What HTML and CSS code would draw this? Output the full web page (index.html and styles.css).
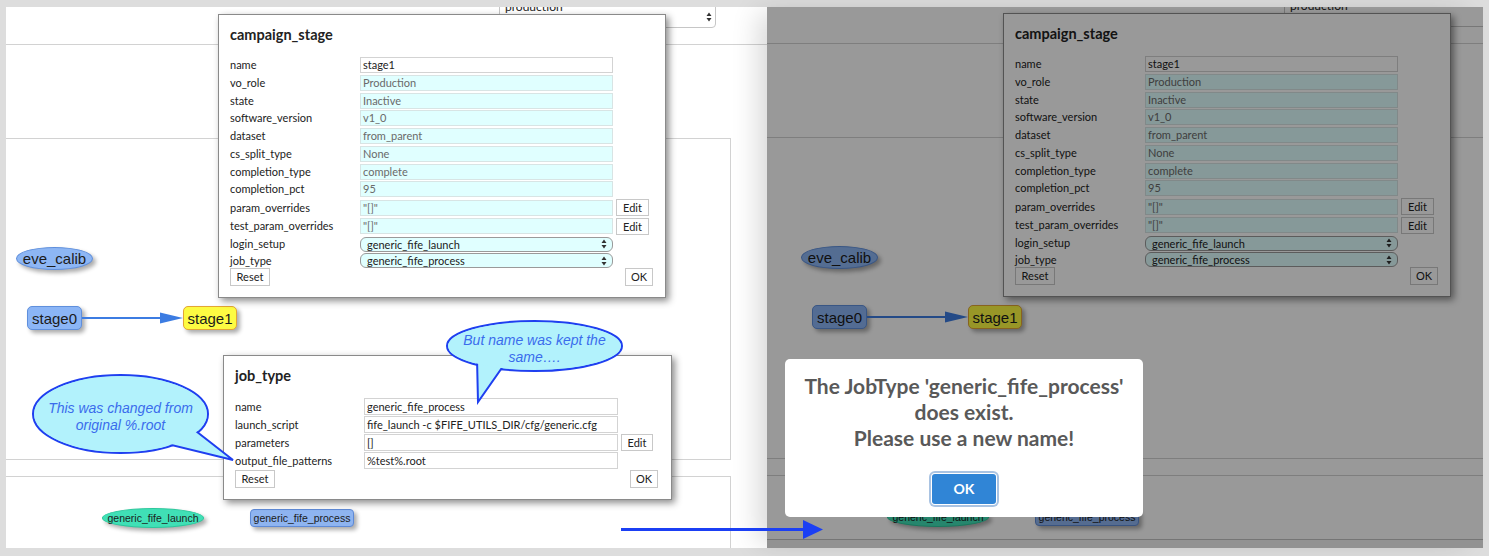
FILE: index.html
```html
<!DOCTYPE html>
<html>
<head>
<meta charset="utf-8">
<title>POMS campaign editor</title>
<link rel="stylesheet" href="styles.css">
</head>
<body>
<div class="stage">

  <div class="panel left">
    <div class="hdr">
      <div class="sel-top"><span>production</span><svg class="ud" width="6" height="10" viewBox="0 0 6 10"><path d="M0.5 4 3 0.5 5.5 4Z M0.5 6 3 9.5 5.5 6Z" fill="#333"/></svg></div>
    </div>
    <div class="band"></div>
    <div class="graph">
      <div class="canvas">
        <div class="node ell eve">eve_calib</div>
        <div class="node box s0">stage0</div>
        <svg class="edge" width="102" height="14" viewBox="0 0 102 14"><line x1="0" y1="7" x2="80" y2="7" stroke="#3c7ce2" stroke-width="2"/><polygon points="78,1.5 101,7 78,12.5" fill="#3c7ce2"/></svg>
        <div class="node box s1">stage1</div>
      </div>
    </div>
    <div class="gap"></div>
    <div class="jobs">
      <div class="canvas">
        <div class="node ell launch">generic_fife_launch</div>
        <div class="node box proc">generic_fife_process</div>
      </div>
    </div>

    <div class="dlg cs">
      <h3 class="dlg-title">campaign_stage</h3>
      <div class="form">
        <div class="row"><span class="lbl">name</span><span class="fld">stage1</span></div>
        <div class="row"><span class="lbl">vo_role</span><span class="fld ro">Production</span></div>
        <div class="row"><span class="lbl">state</span><span class="fld ro">Inactive</span></div>
        <div class="row"><span class="lbl">software_version</span><span class="fld ro">v1_0</span></div>
        <div class="row"><span class="lbl">dataset</span><span class="fld ro">from_parent</span></div>
        <div class="row"><span class="lbl">cs_split_type</span><span class="fld ro">None</span></div>
        <div class="row"><span class="lbl">completion_type</span><span class="fld ro">complete</span></div>
        <div class="row"><span class="lbl">completion_pct</span><span class="fld ro">95</span></div>
        <div class="row"><span class="lbl">param_overrides</span><span class="fld ro">"[]"</span><span class="btn edit">Edit</span></div>
        <div class="row"><span class="lbl">test_param_overrides</span><span class="fld ro">"[]"</span><span class="btn edit">Edit</span></div>
        <div class="row"><span class="lbl">login_setup</span><span class="sel"><span>generic_fife_launch</span><svg class="ud" width="6" height="10" viewBox="0 0 6 10"><path d="M0.5 4 3 0.5 5.5 4Z M0.5 6 3 9.5 5.5 6Z" fill="#333"/></svg></span></div>
        <div class="row"><span class="lbl">job_type</span><span class="sel"><span>generic_fife_process</span><svg class="ud" width="6" height="10" viewBox="0 0 6 10"><path d="M0.5 4 3 0.5 5.5 4Z M0.5 6 3 9.5 5.5 6Z" fill="#333"/></svg></span></div>
      </div>
      <div class="btns"><span class="btn reset">Reset</span><span class="btn ok">OK</span></div>
    </div>

    <div class="dlg jt">
      <h3 class="dlg-title">job_type</h3>
      <div class="form">
        <div class="row"><span class="lbl">name</span><span class="fld">generic_fife_process</span></div>
        <div class="row"><span class="lbl">launch_script</span><span class="fld">fife_launch -c $FIFE_UTILS_DIR/cfg/generic.cfg</span></div>
        <div class="row"><span class="lbl">parameters</span><span class="fld">[]</span><span class="btn edit">Edit</span></div>
        <div class="row"><span class="lbl">output_file_patterns</span><span class="fld">%test%.root</span></div>
      </div>
      <div class="btns"><span class="btn reset">Reset</span><span class="btn ok">OK</span></div>
    </div>

    <div class="bubble b1">
      <svg width="206" height="91" viewBox="0 0 206 91">
        <ellipse cx="90.5" cy="42" rx="87.5" ry="39" fill="#b2f2fc" stroke="#1f3ff0" stroke-width="2"/>
        <polygon points="162,56 203,88 133,71" fill="#b2f2fc" stroke="#1f3ff0" stroke-width="2"/>
        <ellipse cx="90.5" cy="42" rx="86.3" ry="37.8" fill="#b2f2fc"/>
      </svg>
      <div class="btxt t1">This was changed from<br>original %.root</div>
    </div>

    <div class="bubble b2">
      <svg width="181" height="87" viewBox="0 0 181 87">
        <ellipse cx="90.5" cy="28" rx="87.5" ry="25" fill="#b2f2fc" stroke="#1f3ff0" stroke-width="2"/>
        <polygon points="33,40 34,84 62,44" fill="#b2f2fc" stroke="#1f3ff0" stroke-width="2"/>
        <ellipse cx="90.5" cy="28" rx="86.3" ry="23.8" fill="#b2f2fc"/>
      </svg>
      <div class="btxt t2">But name was kept the<br>same….</div>
    </div>
  </div>

  <div class="panel right">
    <div class="hdr">
      <div class="sel-top"><span>production</span><svg class="ud" width="6" height="10" viewBox="0 0 6 10"><path d="M0.5 4 3 0.5 5.5 4Z M0.5 6 3 9.5 5.5 6Z" fill="#333"/></svg></div>
    </div>
    <div class="band"></div>
    <div class="graph">
      <div class="canvas">
        <div class="node ell eve">eve_calib</div>
        <div class="node box s0">stage0</div>
        <svg class="edge" width="102" height="14" viewBox="0 0 102 14"><line x1="0" y1="7" x2="80" y2="7" stroke="#3c7ce2" stroke-width="2"/><polygon points="78,1.5 101,7 78,12.5" fill="#3c7ce2"/></svg>
        <div class="node box s1">stage1</div>
      </div>
    </div>
    <div class="gap"></div>
    <div class="jobs">
      <div class="canvas">
        <div class="node ell launch">generic_fife_launch</div>
        <div class="node box proc">generic_fife_process</div>
      </div>
    </div>
    <div class="foot"></div>

    <div class="dlg cs">
      <h3 class="dlg-title">campaign_stage</h3>
      <div class="form">
        <div class="row"><span class="lbl">name</span><span class="fld">stage1</span></div>
        <div class="row"><span class="lbl">vo_role</span><span class="fld ro">Production</span></div>
        <div class="row"><span class="lbl">state</span><span class="fld ro">Inactive</span></div>
        <div class="row"><span class="lbl">software_version</span><span class="fld ro">v1_0</span></div>
        <div class="row"><span class="lbl">dataset</span><span class="fld ro">from_parent</span></div>
        <div class="row"><span class="lbl">cs_split_type</span><span class="fld ro">None</span></div>
        <div class="row"><span class="lbl">completion_type</span><span class="fld ro">complete</span></div>
        <div class="row"><span class="lbl">completion_pct</span><span class="fld ro">95</span></div>
        <div class="row"><span class="lbl">param_overrides</span><span class="fld ro">"[]"</span><span class="btn edit">Edit</span></div>
        <div class="row"><span class="lbl">test_param_overrides</span><span class="fld ro">"[]"</span><span class="btn edit">Edit</span></div>
        <div class="row"><span class="lbl">login_setup</span><span class="sel"><span>generic_fife_launch</span><svg class="ud" width="6" height="10" viewBox="0 0 6 10"><path d="M0.5 4 3 0.5 5.5 4Z M0.5 6 3 9.5 5.5 6Z" fill="#333"/></svg></span></div>
        <div class="row"><span class="lbl">job_type</span><span class="sel"><span>generic_fife_process</span><svg class="ud" width="6" height="10" viewBox="0 0 6 10"><path d="M0.5 4 3 0.5 5.5 4Z M0.5 6 3 9.5 5.5 6Z" fill="#333"/></svg></span></div>
      </div>
      <div class="btns"><span class="btn reset">Reset</span><span class="btn ok">OK</span></div>
    </div>

    <div class="dim"></div>
    <div class="modal">
      <div class="modal-msg">The JobType 'generic_fife_process'<br>does exist.<br>Please use a new name!</div>
      <span class="modal-ok">OK</span>
    </div>
  </div>

  <svg class="big-arrow" width="203" height="21" viewBox="0 0 203 21">
    <line x1="0" y1="10.5" x2="184" y2="10.5" stroke="#1b3ff4" stroke-width="3"/>
    <polygon points="182,1 202,10.5 182,20" fill="#1b3ff4"/>
  </svg>
</div>
</body>
</html>
```
FILE: styles.css
```css
* { box-sizing: border-box; }
html, body { margin: 0; }
body {
  background: #dddddd;
  font-family: Lato, "Noto Sans", sans-serif;
}
.stage {
  position: relative;
  display: flex;
  height: 556px;
  padding: 7px 6px 8px 6px;
}
.panel {
  position: relative;
  height: 541px;
  overflow: hidden;
  background: #fff;
  display: flex;
  flex-direction: column;
  flex: none;
}
.panel.left { width: 761px; }
.panel.right {
  width: 716px;
  z-index: 1;
  box-shadow: -14px 0 26px -6px rgba(0,0,0,.16);
}

/* page chrome lines */
.hdr { height: 38px; border-bottom: 1px solid #d2d2d2; flex: none; }
.right .hdr { height: 37px; }
.band { height: 94px; border-bottom: 1px solid #d2d2d2; flex: none; }
.left .band { width: 725px; }
.graph {
  height: 321px;
  border-bottom: 1px solid #d2d2d2;
  border-right: 1px solid #d2d2d2;
  width: 725px;
  flex: none;
}
.gap { height: 16px; flex: none; }
.jobs {
  flex: 1;
  width: 725px;
  border-top: 1px solid #d2d2d2;
  border-right: 1px solid #d2d2d2;
}
.right .graph, .right .jobs { width: 100%; border-right: none; }
.right .jobs { flex: none; height: 65px; border-bottom: 1px solid #c4c4c4; }
.foot { flex: 1; background: #f4f4f4; }

.canvas { position: relative; height: 100%; }
.right .canvas { margin-left: 24px; }

.sel-top {
  margin: -9px 0 0 493px;
  width: 217px;
  height: 30px;
  border: 1px solid #c6c6c6;
  border-radius: 4px;
  display: flex;
  justify-content: space-between;
  align-items: flex-start;
  padding: 1px 3px 0 5px;
  font-size: 12px;
  line-height: 14px;
  color: #222;
}
.right .sel-top { margin: -10px 0 0 517px; }
.sel-top .ud { margin-top: 12px; }

/* graph nodes */
.node {
  position: absolute;
  display: flex;
  align-items: center;
  justify-content: center;
  font-family: "Liberation Sans", Arial, sans-serif;
  font-size: 15px;
  color: #1b1b1b;
  box-shadow: 3px 3px 4px rgba(0,0,0,.33);
  white-space: nowrap;
}
.ell { border-radius: 50%; }
.box { border-radius: 5px; }
.eve { left: 10px; top: 108px; width: 77px; height: 23px; background: #8db6f4; border: 1px solid #5f8fdc; }
.s0 { left: 21px; top: 167px; width: 55px; height: 24px; background: #8bb5f6; border: 1px solid #5f8fdc; }
.s1 { left: 177px; top: 167px; width: 54px; height: 24px; background: #fdfb42; border: 1px solid #e3a535; }
.edge { position: absolute; left: 76px; top: 172px; }
.launch { left: 96px; top: 31px; width: 102px; height: 20px; background: #40e0b6; border: 1px solid #2cc79c; font-size: 10.5px; }
.proc { left: 244px; top: 32px; width: 104px; height: 18px; background: #8eb4f0; border: 1px solid #5e8ad6; font-size: 10.5px; border-radius: 4px; }

/* dialogs */
.dlg {
  position: absolute;
  width: 448px;
  background: #fff;
  border: 1px solid #8a8a8a;
  box-shadow: 3px 3px 7px rgba(0,0,0,.45);
  padding: 11px 12px 11px 11px;
  color: #222;
  font-family: Lato, "Noto Sans", sans-serif;
}
.dlg.cs { left: 212px; top: 7px; }
.right .dlg.cs { left: 236px; top: 6px; }
.dlg.jt { left: 217px; top: 348px; width: 449px; }
.dlg-title {
  margin: 0 0 14px;
  font-size: 14.5px;
  font-weight: 700;
  line-height: 17px;
  color: #222;
}
.form { display: flex; flex-direction: column; gap: 1.75px; }
.jt .form { gap: 1px; }
.row { display: flex; align-items: center; font-size: 11px; }
.lbl { width: 130px; flex: none; line-height: 14px; }
.jt .lbl { width: 129px; }
.fld {
  width: 253px;
  height: 16px;
  flex: none;
  border: 1px solid #d3d3d3;
  padding: 0 2px;
  font-size: 11px;
  line-height: 14px;
  white-space: nowrap;
  overflow: hidden;
  color: #222;
  background: #fff;
}
.jt .fld { width: 254px; height: 17px; line-height: 15px; }
.fld.ro { background: #e0ffff; color: #6a6a6a; border-color: #d8e4e4; }
.btn {
  display: block;
  height: 17px;
  border: 1px solid #c8c8c8;
  background: #fff;
  font-size: 11px;
  line-height: 15px;
  text-align: center;
  color: #222;
  flex: none;
}
.edit { width: 33px; margin-left: 3px; }
.jt .edit { width: 32px; }
.sel {
  width: 253px;
  height: 15px;
  flex: none;
  border: 1px solid #9a9a9a;
  border-radius: 6px;
  background: #e0ffff;
  display: flex;
  align-items: center;
  justify-content: space-between;
  padding: 0 5px 0 6px;
  font-size: 11px;
  line-height: 13px;
  color: #222;
}
.ud { display: block; flex: none; }
.btns { display: flex; justify-content: space-between; width: 423px; }
.jt .btns { margin-top: 1px; }
.btns .btn { height: 18px; line-height: 16px; }
.reset { width: 40px; }
.ok { width: 28px; }

/* annotation bubbles */
.bubble { position: absolute; z-index: 3; }
.bubble svg { position: absolute; left: 0; top: 0; }
.b1 { left: 24px; top: 365px; width: 206px; height: 91px; }
.b2 { left: 438px; top: 311px; width: 181px; height: 87px; }
.btxt {
  position: absolute;
  left: 0;
  width: 181px;
  text-align: center;
  font-family: "Liberation Sans", Arial, sans-serif;
  font-style: italic;
  font-size: 14px;
  color: #3a6cec;
  white-space: nowrap;
}
.t1 { top: 27.6px; line-height: 17px; }
.t2 { top: 14px; line-height: 16.6px; }

/* modal on right */
.dim { position: absolute; inset: 0; background: rgba(0,0,0,.4); z-index: 4; }
.modal {
  position: absolute;
  left: 18px;
  top: 352px;
  width: 358px;
  height: 158px;
  background: #fff;
  border-radius: 5px;
  text-align: center;
  padding-top: 14px;
  z-index: 5;
}
.modal-msg {
  font-family: Lato, "Noto Sans", sans-serif;
  font-weight: 700;
  font-size: 21px;
  line-height: 26px;
  color: #595959;
}
.modal-ok {
  display: inline-block;
  margin-top: 23px;
  width: 64px;
  height: 30px;
  background: #3085d6;
  border-radius: 3px;
  color: #fff;
  font-family: Lato, "Noto Sans", sans-serif;
  font-weight: 700;
  font-size: 14px;
  line-height: 30px;
  box-shadow: 0 0 0 1px #fff, 0 0 0 3px #a9c3e2;
}

.big-arrow { position: absolute; left: 621px; top: 519px; z-index: 10; }
```
